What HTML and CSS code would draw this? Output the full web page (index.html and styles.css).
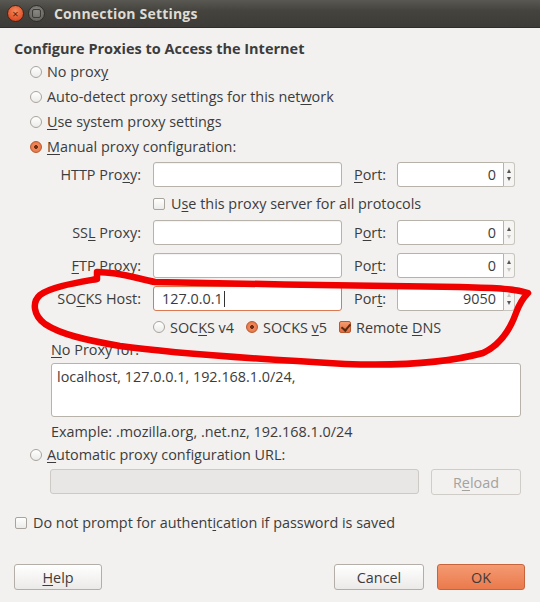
FILE: index.html
```html
<!DOCTYPE html>
<html>
<head>
<meta charset="utf-8">
<link rel="stylesheet" href="styles.css">
</head>
<body>
<div class="window">
  <div class="titlebar">
    <span class="wbtn close">×</span>
    <span class="wbtn max"></span>
    <span class="title">Connection Settings</span>
  </div>
  <div class="content">
    <div class="heading">Configure Proxies to Access the Internet</div>
    <div class="opts">
      <div class="row"><span class="radio"></span><span>No prox<u>y</u></span></div>
      <div class="row"><span class="radio"></span><span>Auto-detect proxy settings for this net<u>w</u>ork</span></div>
      <div class="row"><span class="radio"></span><span><u>U</u>se system proxy settings</span></div>
      <div class="row"><span class="radio on"></span><span><u>M</u>anual proxy configuration:</span></div>
    </div>
    <div class="grid">
      <label class="lbl">HTTP Pro<u>x</u>y:</label>
      <div class="input"></div>
      <label class="plbl"><u>P</u>ort:</label>
      <div class="spin"><div class="num">0</div><div class="arrows"><span class="up"></span><span class="down"></span></div></div>

      <div></div>
      <div class="chkrow span3"><span class="check"></span><span>U<u>s</u>e this proxy server for all protocols</span></div>

      <label class="lbl">SS<u>L</u> Proxy:</label>
      <div class="input"></div>
      <label class="plbl">P<u>o</u>rt:</label>
      <div class="spin"><div class="num">0</div><div class="arrows"><span class="up"></span><span class="down dis"></span></div></div>

      <label class="lbl"><u>F</u>TP Proxy:</label>
      <div class="input"></div>
      <label class="plbl">Po<u>r</u>t:</label>
      <div class="spin"><div class="num">0</div><div class="arrows"><span class="up"></span><span class="down dis"></span></div></div>

      <label class="lbl">SO<u>C</u>KS Host:</label>
      <div class="input focus">127.0.0.1<span class="caret"></span></div>
      <label class="plbl">Por<u>t</u>:</label>
      <div class="spin"><div class="num">9050</div><div class="arrows"><span class="up dis"></span><span class="down"></span></div></div>

      <div></div>
      <div class="socks span3">
        <span class="item"><span class="radio"></span><span>SOC<u>K</u>S v4</span></span>
        <span class="item"><span class="radio on"></span><span>SOCKS <u>v</u>5</span></span>
        <span class="item"><span class="check on"></span><span>Remote <u>D</u>NS</span></span>
      </div>
    </div>
    <div class="noproxy">
      <div class="nplabel"><u>N</u>o Proxy for:</div>
      <div class="textarea">localhost, 127.0.0.1, 192.168.1.0/24,</div>
      <div class="example">Example: .mozilla.org, .net.nz, 192.168.1.0/24</div>
    </div>
    <div class="opts">
      <div class="row"><span class="radio"></span><span><u>A</u>utomatic proxy configuration URL:</span></div>
    </div>
    <div class="autorow">
      <div class="input disabled"></div>
      <div class="btn disabledbtn">R<u>e</u>load</div>
    </div>
    <div class="row authrow"><span class="check"></span><span>Do not prompt for authent<u>i</u>cation if password is saved</span></div>
    <div class="buttons">
      <div class="btn help"><u>H</u>elp</div>
      <div class="spacer"></div>
      <div class="btn cancel">Cancel</div>
      <div class="btn ok">OK</div>
    </div>
  </div>
  <svg class="scribble" width="540" height="602" viewBox="0 0 540 602">
    <path d="M97 272 L97 279 C75 283 50 287 40 295 C32 302 33 315 45 324 C60 334 85 340 120 346 C170 353 240 358 345 364 C400 366 450 362 483 353 C500 345 510 330 516 313 C520 302 524 297 528 293 C515 289 500 288 460 287 C380 286 250 284 155 282 C135 278 120 272 97 272"
      fill="none" stroke="#f10000" stroke-width="6.5" stroke-linecap="round" stroke-linejoin="round"/>
  </svg>
</div>
</body>
</html>
```
FILE: styles.css
```css
* { box-sizing: border-box; }
html, body { margin: 0; padding: 0; }
body {
  width: 540px; height: 602px; overflow: hidden;
  font-family: "Open Sans", "DejaVu Sans", sans-serif;
  font-size: 14.4px;
  color: #3c3c3c;
  background: #f2f1f0;
}
u { text-decoration: underline; text-underline-offset: 2px; }
.window { position: relative; width: 540px; height: 602px; }
.titlebar {
  height: 28px;
  background: linear-gradient(#5a5852, #44433e 40%, #3c3b37);
  border-bottom: 1px solid #2e2d29;
  display: flex; align-items: center;
  padding-left: 7px;
}
.wbtn {
  width: 17px; height: 17px; border-radius: 50%;
  display: inline-flex; align-items: center; justify-content: center;
  margin-right: 4px;
  font-size: 11px; line-height: 1; color: #5a1e08;
}
.close { background: radial-gradient(circle at 50% 35%, #f48b5b, #e0502a 70%, #b23c18); border: 1px solid #3a2a20; }
.max { background: radial-gradient(circle at 50% 35%, #8a8882, #6a6863 70%, #55534e); border: 1px solid #2f2e2a; }
.max::after { content: ""; width: 7px; height: 7px; border: 1px solid #3d3c38; border-radius: 2px; }
.title { margin-left: 5px; font-weight: bold; font-size: 14px; color: #dfdbd2; letter-spacing: 0.2px; }

.content { padding: 11px 14px 0 14px; }
.heading { font-weight: bold; font-size: 14.5px; height: 20px; line-height: 20px; }
.opts { padding-left: 16px; }
.row { display: flex; align-items: center; height: 25px; gap: 5px; }
.radio {
  width: 12px; height: 12px; border-radius: 50%; flex: none;
  border: 1px solid #a9a49d;
  background: linear-gradient(#ffffff, #ecebea);
}
.radio.on {
  border-color: #b8592f;
  background: radial-gradient(circle, #6e2f14 0 1.6px, #f08a5e 2.2px, #e26c3c 100%);
}
.check {
  width: 12px; height: 12px; border-radius: 2px; flex: none;
  border: 1px solid #a9a49d; background: linear-gradient(#ffffff, #ecebea);
  position: relative;
}
.check.on { border-color: #b8592f; background: linear-gradient(#f59a70, #e26c3c); }
.check.on::after {
  content: ""; position: absolute; left: 3px; top: 0px; width: 4px; height: 7px;
  border: solid #5a2a12; border-width: 0 2px 2px 0; transform: rotate(40deg);
}

.grid {
  display: grid;
  grid-template-columns: 89px 189px 31px 118px;
  column-gap: 12px;
  row-gap: 8px;
  margin-left: 38px;
  margin-top: 3px;
  grid-template-rows: 25px 17px 25px 25px 25px 16px;
  align-items: center;
}
.grid > .span3 { grid-column: 2 / span 3; }
.lbl { text-align: right; white-space: nowrap; }
.plbl { white-space: nowrap; }
.input {
  height: 25px; border: 1px solid #b7b2aa; border-radius: 3px;
  background: #fff; padding: 0 8px; display: flex; align-items: center;
  box-shadow: inset 0 1px 1px rgba(0,0,0,0.05);
}
.input.focus { border-color: #d97a52; }
.caret { display: inline-block; width: 1px; height: 16px; background: #333; margin-left: 1px; }
.spin { display: flex; height: 25px; }
.num {
  flex: 1; border: 1px solid #b7b2aa; border-radius: 3px 0 0 3px; background: #fff;
  text-align: right; padding-right: 7px; line-height: 23px;
}
.arrows {
  width: 11px; border: 1px solid #c9c5bf; border-left: none; border-radius: 0 3px 3px 0;
  background: #f6f5f4; display: flex; flex-direction: column; align-items: center; justify-content: center; gap: 4px;
}
.up { width: 0; height: 0; border-left: 2.5px solid transparent; border-right: 2.5px solid transparent; border-bottom: 4px solid #555; }
.down { width: 0; height: 0; border-left: 2.5px solid transparent; border-right: 2.5px solid transparent; border-top: 4px solid #555; }
.up.dis { border-bottom-color: #c8c6c2; }
.down.dis { border-top-color: #c8c6c2; }
.chkrow { display: flex; align-items: center; gap: 6px; }
.socks { display: flex; align-items: center; gap: 12px; }
.socks .item { display: flex; align-items: center; gap: 5px; }
.noproxy { padding-left: 37px; padding-right: 5px; }
.nplabel { height: 22px; line-height: 22px; margin-top: 4px; }
.textarea {
  height: 54px; border: 1px solid #b7b2aa; border-radius: 3px; background: #fff;
  padding: 3px 5px; margin-top: 2px;
}
.example { height: 21px; line-height: 21px; margin-top: 4px; }
.autorow { display: flex; gap: 12px; margin-left: 36px; margin-top: 2px; padding-right: 5px; }
.input.disabled { flex: 1; background: #e8e7e6; border-color: #cdcac5; box-shadow: none; }
.btn {
  height: 26px; border: 1px solid #b3aea7; border-radius: 3px;
  background: linear-gradient(#ffffff, #eceae8);
  display: flex; align-items: center; justify-content: center;
}
.disabledbtn { width: 90px; color: #a5a29e; border-color: #d0cdc8; background: #f2f1f0; }
.authrow { margin-top: 15px; padding-left: 1px; gap: 6px; }
.buttons { display: flex; margin-top: 29px; gap: 13px; padding-right: 1px; }
.spacer { flex: 1; }
.help { width: 88px; }
.cancel { width: 90px; }
.ok { width: 88px; background: linear-gradient(#f49a72, #ea7a4c); border-color: #c8643c; color: #3c3c3c; }
.scribble { position: absolute; left: 0; top: 0; pointer-events: none; }
```
